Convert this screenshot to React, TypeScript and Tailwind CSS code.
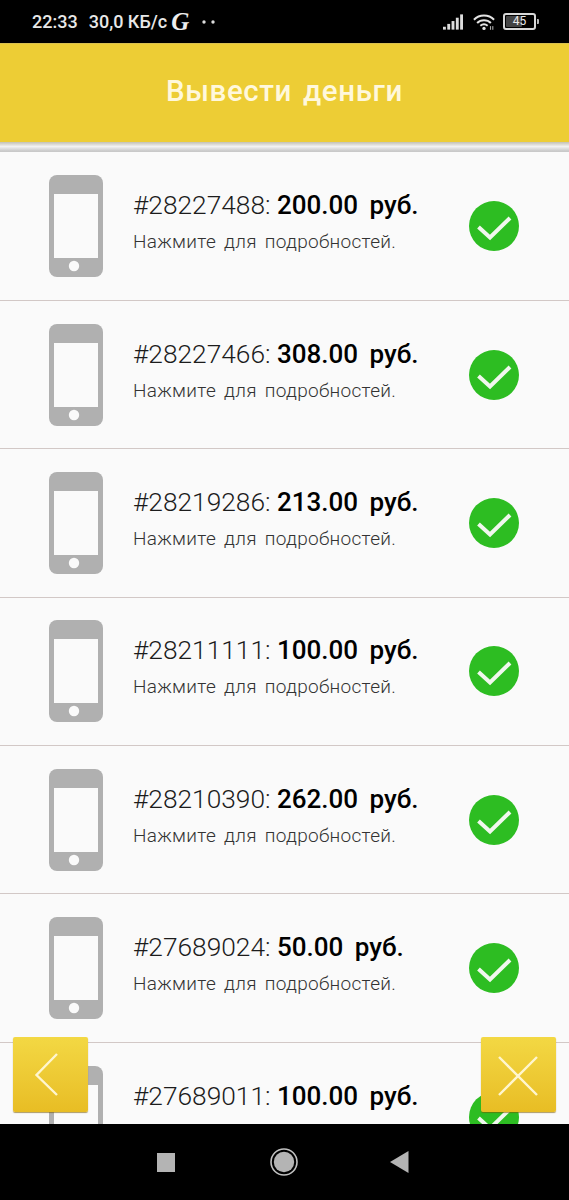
const rows = [
  ["#28227488:", "200.00"],
  ["#28227466:", "308.00"],
  ["#28219286:", "213.00"],
  ["#28211111:", "100.00"],
  ["#28210390:", "262.00"],
  ["#27689024:", "50.00"],
  ["#27689011:", "100.00"],
];

function Phone() {
  return (
    <svg width="54" height="102" viewBox="0 0 54 102" className="shrink-0">
      <rect x="0" y="0" width="54" height="102" rx="8" fill="#b0b0b0" />
      <rect x="5" y="19" width="44" height="64" fill="#fafafa" />
      <circle cx="25" cy="91" r="5.2" fill="#fafafa" />
    </svg>
  );
}

function Check() {
  return (
    <svg width="50" height="50" viewBox="0 0 50 50" className="shrink-0">
      <circle cx="25" cy="25" r="25" fill="#2dbd22" />
      <path d="M9.5 26 L21 36.5 L41 17" fill="none" stroke="#f1f7ee" strokeWidth="4" />
    </svg>
  );
}

function Row({ id, sum }: { id: string; sum: string }) {
  return (
    <div className="h-[148.4px] shrink-0 flex items-center pl-[49px] border-b border-[#d2c8c6] box-border">
      <Phone />
      <div className="ml-[30px] w-[336px] shrink-0 -mt-[6px]">
        <div className="-mt-[2px] text-[26.3px] leading-[30px] text-[#1c1c1c] font-light whitespace-nowrap">
          {id}{" "}
          <span className="font-medium text-black text-[26px] [word-spacing:5px]">{sum} руб.</span>
        </div>
        <div className="mt-[10px] text-[19px] leading-[24px] text-[#333] font-light whitespace-nowrap tracking-[0.3px] [word-spacing:3px]">
          Нажмите для подробностей.
        </div>
      </div>
      <Check />
    </div>
  );
}

function FloatButton({ side, children }: { side: "left" | "right"; children: React.ReactNode }) {
  return (
    <div
      className={`absolute top-[1037px] w-[75px] h-[75px] rounded-[2px] bg-gradient-to-b from-[#f3d843] to-[#e8bd24] shadow-[0_1px_1px_rgba(120,90,0,0.6)] flex items-center justify-center ${
        side === "left" ? "left-[13px]" : "left-[481px]"
      }`}
    >
      {children}
    </div>
  );
}

export default function App() {
  return (
    <div className="relative w-[569px] h-[1200px] overflow-hidden bg-[#fafafa] flex flex-col font-['Roboto',sans-serif]">
      <div className="h-[43px] shrink-0 bg-black flex items-center pl-[32px] pr-[30px] text-[#e8e8e8] text-[18px] font-medium">
        <span>22:33</span>
        <span className="ml-[11px]">30,0 КБ/с</span>
        <span className="ml-[4px] text-[25px] leading-none font-bold italic font-['Liberation_Serif',serif] text-[#eeeeee]">G</span>
        <svg width="14" height="4" viewBox="0 0 14 4" className="ml-[13px]">
          <circle cx="2" cy="2" r="1.7" fill="#ddd" />
          <circle cx="11" cy="2" r="1.7" fill="#ddd" />
        </svg>
        <div className="ml-auto flex items-center">
          <svg width="20" height="16" viewBox="0 0 21 16">
            <rect x="0" y="13" width="3" height="3" fill="#ddd" />
            <rect x="4.5" y="10" width="3" height="6" fill="#ddd" />
            <rect x="9" y="7" width="3" height="9" fill="#ddd" />
            <rect x="13.5" y="3.5" width="3" height="12.5" fill="#ddd" />
            <rect x="18" y="0" width="3" height="16" fill="#ddd" />
          </svg>
          <svg width="22" height="18" viewBox="0 0 24 18" className="ml-[10px]">
            <path d="M1 6.5 C7 0.5 17 0.5 23 6.5" fill="none" stroke="#e4e4e4" strokeWidth="2.2" />
            <path d="M4.5 10 C8.5 6 15.5 6 19.5 10" fill="none" stroke="#e4e4e4" strokeWidth="2.2" />
            <path d="M8 13 C10.5 11 13.5 11 16 13" fill="none" stroke="#e4e4e4" strokeWidth="2.2" />
            <circle cx="12" cy="16" r="1.8" fill="#e4e4e4" />
            <rect x="18.5" y="13.5" width="1.2" height="4" fill="#aaa" />
            <rect x="21" y="13.5" width="1.2" height="4" fill="#aaa" />
          </svg>
          <div className="ml-[8px] w-[33px] h-[17px] rounded-[3px] border-2 border-[#d8d8d8] p-[1px] flex">
            <div className="w-[16px] bg-[#444] rounded-[1px] -mr-[16px]" />
            <span className="relative w-full text-center text-[12px] leading-[11px] font-normal text-[#e8e8e8]">45</span>
          </div>
          <div className="w-[2px] h-[5px] ml-[1px] bg-[#bbb] rounded-r-[1px]" />
        </div>
      </div>

      <div className="h-[99px] shrink-0 bg-[#edcd35] border-t border-[#d9c050] flex items-center justify-center pb-[4px]">
        <span className="text-[29.5px] font-medium text-[#fff8dc] tracking-[0.6px] [word-spacing:3px]">Вывести деньги</span>
      </div>

      <div className="h-[10px] shrink-0 bg-gradient-to-b from-[#c4c1b4] via-[#f2f2f2] to-[#c9c9c9] border-b border-[#c9c9c9]" />

      <div className="flex-1 min-h-0 overflow-hidden flex flex-col pt-[0.5px]">
        {rows.map(([id, sum]) => (
          <Row key={id} id={id} sum={sum} />
        ))}
      </div>

      <div className="h-[76px] shrink-0 bg-black flex items-center pl-[157px] gap-[96px] relative z-10">
        <div className="w-[18px] h-[19px] bg-[#b4b4b4]" />
        <svg width="28" height="28" viewBox="0 0 28 28" className="-ml-[1px]">
          <circle cx="14" cy="14" r="13" fill="none" stroke="#c0c0c0" strokeWidth="1.6" />
          <circle cx="14" cy="14" r="10.2" fill="#b4b4b4" />
        </svg>
        <svg width="19" height="22" viewBox="0 0 19 22" className="-ml-[4px]">
          <path d="M0 11 L18.5 0 V22 Z" fill="#b4b4b4" />
        </svg>
      </div>

      <FloatButton side="left">
        <svg width="75" height="75" viewBox="0 0 75 75">
          <path d="M44 21 L23.5 42 L44 62" fill="none" stroke="#fff6cf" strokeWidth="2.4" transform="translate(0 -4)" />
        </svg>
      </FloatButton>
      <FloatButton side="right">
        <svg width="75" height="75" viewBox="0 0 75 75">
          <path d="M18 20 L56 58 M56 20 L18 58" fill="none" stroke="#fff6cf" strokeWidth="2.4" />
        </svg>
      </FloatButton>
    </div>
  );
}
